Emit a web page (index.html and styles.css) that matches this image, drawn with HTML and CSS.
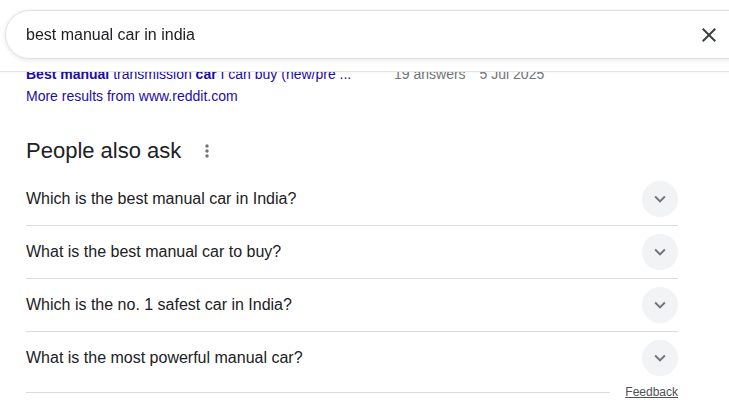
FILE: index.html
```html
<!DOCTYPE html>
<html>
<head>
<meta charset="utf-8">
<link rel="stylesheet" href="styles.css">
</head>
<body>
<header class="topbar">
  <div class="searchbox">
    <span class="query">best manual car in india</span>
    <svg class="clear" viewBox="0 0 24 24" width="24" height="24"><path d="M19 6.41L17.59 5 12 10.59 6.41 5 5 6.41 10.59 12 5 17.59 6.41 19 12 13.41 17.59 19 19 17.59 13.41 12z"/></svg>
  </div>
</header>
<main class="content">
  <div class="result-row">
    <a class="result-link"><b>Best manual</b> transmission <b>car</b> I can buy (new/pre ...</a>
    <span class="meta">19 answers</span>
    <span class="meta">5 Jul 2025</span>
  </div>
  <a class="more">More results from www.reddit.com</a>

  <section class="paa">
    <div class="paa-head">
      <h2>People also ask</h2>
      <svg class="kebab" viewBox="0 0 24 24" width="20" height="20"><path d="M12 8c1.1 0 2-.9 2-2s-.9-2-2-2-2 .9-2 2 .9 2 2 2zm0 2c-1.1 0-2 .9-2 2s.9 2 2 2 2-.9 2-2-.9-2-2-2zm0 6c-1.1 0-2 .9-2 2s.9 2 2 2 2-.9 2-2-.9-2-2-2z"/></svg>
    </div>
    <div class="q"><span>Which is the best manual car in India?</span><span class="chev"><svg viewBox="0 0 24 24" width="24" height="24"><path d="M16.59 8.59L12 13.17 7.41 8.59 6 10l6 6 6-6z"/></svg></span></div>
    <div class="q"><span>What is the best manual car to buy?</span><span class="chev"><svg viewBox="0 0 24 24" width="24" height="24"><path d="M16.59 8.59L12 13.17 7.41 8.59 6 10l6 6 6-6z"/></svg></span></div>
    <div class="q"><span>Which is the no. 1 safest car in India?</span><span class="chev"><svg viewBox="0 0 24 24" width="24" height="24"><path d="M16.59 8.59L12 13.17 7.41 8.59 6 10l6 6 6-6z"/></svg></span></div>
    <div class="q last"><span>What is the most powerful manual car?</span><span class="chev"><svg viewBox="0 0 24 24" width="24" height="24"><path d="M16.59 8.59L12 13.17 7.41 8.59 6 10l6 6 6-6z"/></svg></span></div>
    <div class="paa-foot"><span class="rule"></span><a class="feedback">Feedback</a></div>
  </section>
</main>
</body>
</html>
```

FILE: styles.css
```css
html, body {
  margin: 0;
  padding: 0;
  background: #fff;
  overflow: hidden;
}
body {
  font-family: "Liberation Sans", Arial, sans-serif;
  color: #202124;
  width: 729px;
  height: 417px;
}
.topbar {
  position: fixed;
  top: 0;
  left: 0;
  right: 0;
  height: 71px;
  background: #fff;
  border-bottom: 1px solid #e3e3e3;
  box-shadow: 0 1px 2px rgba(0,0,0,.04);
  z-index: 2;
  overflow: hidden;
}
.searchbox {
  position: absolute;
  top: 10px;
  left: 5px;
  width: 760px;
  height: 49px;
  box-sizing: border-box;
  border: 1px solid #dfe1e5;
  border-radius: 25px;
  box-shadow: 0 1px 4px rgba(32,33,36,.12);
  display: flex;
  align-items: center;
  padding-left: 20px;
}
.query {
  font-size: 16px;
  color: #202124;
  flex: 1;
}
.clear {
  fill: #3c4043;
  margin-right: 43px;
}
.content {
  padding: 64px 0 0 26px;
  width: 652px;
}
.result-row {
  display: flex;
  font-size: 14px;
  line-height: 20px;
  height: 20px;
}
.result-link {
  color: #1a0dab;
  width: 368px;
}
.meta {
  color: #70757a;
  margin-right: 14px;
}
.more {
  display: block;
  color: #1a0dab;
  font-size: 14px;
  line-height: 22px;
  margin-top: 1px;
}
.paa {
  margin-top: 21px;
}
.paa-head {
  display: flex;
  align-items: center;
  height: 45px;
}
.paa-head h2 {
  margin: 0;
  font-size: 22px;
  font-weight: 400;
  color: #202124;
  line-height: 28px;
}
.kebab {
  fill: #70757a;
  margin-left: 16px;
}
.q {
  display: flex;
  align-items: center;
  justify-content: space-between;
  height: 52px;
  border-bottom: 1px solid #dadce0;
  font-size: 16px;
  color: #202124;
}
.q.last {
  border-bottom: none;
}
.chev {
  width: 36px;
  height: 36px;
  border-radius: 50%;
  background: #f1f3f4;
  display: flex;
  align-items: center;
  justify-content: center;
  fill: #70757a;
}
.chev svg {
  width: 22px;
  height: 22px;
}
.paa-foot {
  display: flex;
  align-items: center;
  height: 16px;
}
.rule {
  flex: 1;
  border-top: 1px solid #dadce0;
  margin-right: 15px;
}
.feedback {
  font-size: 12px;
  color: #4d5156;
  text-decoration: underline;
  line-height: 16px;
}
```
